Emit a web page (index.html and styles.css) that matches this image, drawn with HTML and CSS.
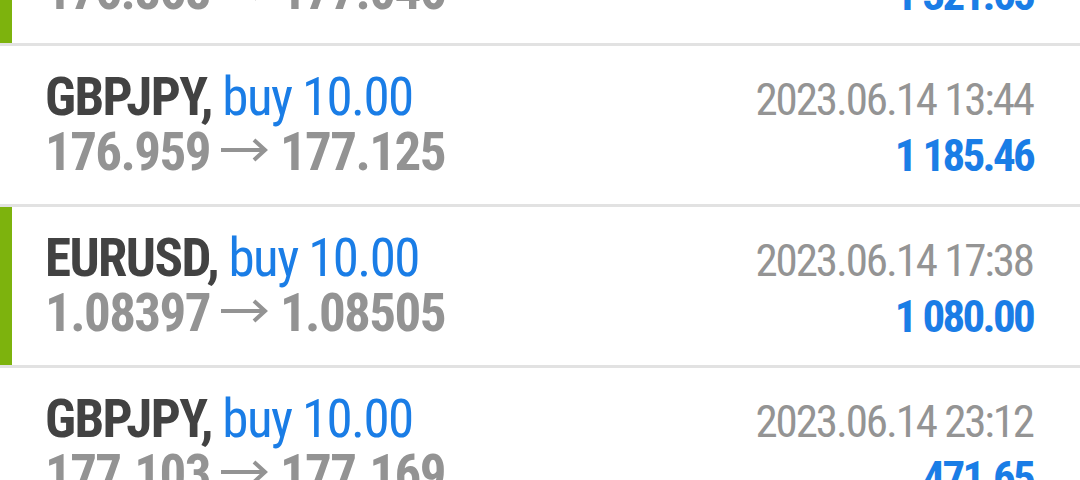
FILE: index.html
```html
<!DOCTYPE html>
<html lang="en">
<head>
  <meta charset="UTF-8">
  <title>History</title>
  <link rel="stylesheet" href="styles.css">
</head>
<body>
  <div class="deals">
    <div class="deal marked">
      <div class="deal-left">
        <div class="deal-title"><b>GBPJPY,</b> <span class="side">buy 10.00</span></div>
        <div class="deal-prices">176.868<svg class="arrow" viewBox="0 0 48 24"><path d="M1 12H45M34 2L45 12L34 22"/></svg>177.046</div>
      </div>
      <div class="deal-right">
        <div class="deal-time">2023.06.14 09:21</div>
        <div class="deal-profit">1 321.65</div>
      </div>
    </div>
    <div class="deal">
      <div class="deal-left">
        <div class="deal-title"><b>GBPJPY,</b> <span class="side">buy 10.00</span></div>
        <div class="deal-prices">176.959<svg class="arrow" viewBox="0 0 48 24"><path d="M1 12H45M34 2L45 12L34 22"/></svg>177.125</div>
      </div>
      <div class="deal-right">
        <div class="deal-time">2023.06.14 13:44</div>
        <div class="deal-profit">1 185.46</div>
      </div>
    </div>
    <div class="deal marked">
      <div class="deal-left">
        <div class="deal-title"><b>EURUSD,</b> <span class="side">buy 10.00</span></div>
        <div class="deal-prices">1.08397<svg class="arrow" viewBox="0 0 48 24"><path d="M1 12H45M34 2L45 12L34 22"/></svg>1.08505</div>
      </div>
      <div class="deal-right">
        <div class="deal-time">2023.06.14 17:38</div>
        <div class="deal-profit">1 080.00</div>
      </div>
    </div>
    <div class="deal">
      <div class="deal-left">
        <div class="deal-title"><b>GBPJPY,</b> <span class="side">buy 10.00</span></div>
        <div class="deal-prices">177.103<svg class="arrow" viewBox="0 0 48 24"><path d="M1 12H45M34 2L45 12L34 22"/></svg>177.169</div>
      </div>
      <div class="deal-right">
        <div class="deal-time">2023.06.14 23:12</div>
        <div class="deal-profit">471.65</div>
      </div>
    </div>
  </div>
</body>
</html>
```

FILE: styles.css
```css
body {
  margin: 0;
  background: #fff;
  font-family: "Roboto Condensed", Roboto, sans-serif;
  font-stretch: 75%;
  overflow: hidden;
}
.deals {
  margin-top: -115px;
  display: flex;
  flex-direction: column;
  gap: 3px;
  background: #e2e2e2;
}
.deal {
  height: 158px;
  background: #fff;
  display: flex;
  justify-content: space-between;
  align-items: center;
  padding: 0 47px 0 45px;
}
.deal.marked {
  box-shadow: inset 12px 0 0 #7db30d;
}
.deal-left {
  font-size: 53px;
  line-height: 55px;
  letter-spacing: -1.6px;
}
.deal-title b {
  font-weight: 700;
  color: #424242;
}
.side {
  color: #1a7de6;
}
.deal-prices {
  font-weight: 700;
  color: #939393;
  white-space: nowrap;
}
.arrow {
  width: 48px;
  height: 24px;
  margin: 0 12px 0 10px;
  vertical-align: 8px;
  fill: none;
  stroke: #939393;
  stroke-width: 4;
}
.deal-right {
  text-align: right;
  font-size: 45px;
  line-height: 56px;
  padding-top: 5px;
}
.deal-time {
  color: #949494;
  letter-spacing: -2.1px;
}
.deal-profit {
  font-weight: 700;
  color: #1a7de6;
  letter-spacing: -2.7px;
}
```
